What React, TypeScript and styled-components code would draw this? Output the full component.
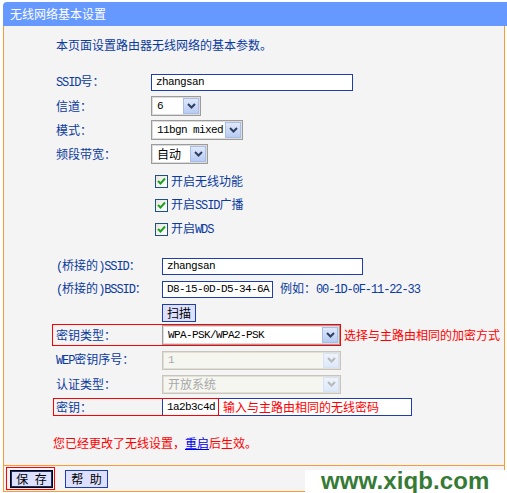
import React from "react";
import styled, { createGlobalStyle } from "styled-components";

const GlobalStyle = createGlobalStyle`
  html, body { margin: 0; padding: 0; background: #fff; }
  body { font-family: "Noto Sans CJK SC", "Noto Sans", sans-serif; font-size: 12px; }
  * { box-sizing: border-box; }
`;

const ORANGE = "#ff9a33";
const BLUE_TEXT = "#0a3aa0";
const FIELD_BORDER = "#1f3fa6";

const Page = styled.div`
  position: relative;
  width: 507px;
  height: 493px;
  padding-top: 2px;
  overflow: hidden;
`;

const TitleBar = styled.div`
  margin-left: 3px;
  height: 24px;
  background: #6699ff;
  border-top-left-radius: 4px;
  color: #fff;
  font-size: 12px;
  line-height: 24px;
  padding-left: 7px;
`;

const Panel = styled.div`
  margin-left: 3px;
  width: 502px;
  height: 439px;
  border-left: 1px solid ${ORANGE};
  border-right: 1px solid ${ORANGE};
  background: #f4f4f4;
  padding: 7px 0 0 52px;
`;

const Row = styled.div<{ $h?: number; $mt?: number; $indent?: number }>`
  position: relative;
  display: flex;
  align-items: center;
  height: ${(p) => p.$h ?? 24}px;
  margin-top: ${(p) => p.$mt ?? 0}px;
  padding-left: ${(p) => p.$indent ?? 0}px;
  line-height: 16px;
  white-space: nowrap;
`;

const Label = styled.span<{ $w: number }>`
  width: ${(p) => p.$w}px;
  flex-shrink: 0;
  color: ${BLUE_TEXT};
`;

const Note = styled.span<{ $color?: string; $ml?: number }>`
  color: ${(p) => p.$color ?? BLUE_TEXT};
  margin-left: ${(p) => p.$ml ?? 0}px;
`;

const Lat = styled.span`
  font-family: "Liberation Mono", "DejaVu Sans Mono", monospace;
  font-size: 12px;
  letter-spacing: -1.1px;
`;

const MonoValue = styled.span<{ $w?: number }>`
  width: ${(p) => (p.$w ? `${p.$w}px` : "auto")};
  flex-shrink: 0;
  font-family: "Liberation Mono", "DejaVu Sans Mono", monospace;
  font-size: 11px;
  letter-spacing: -0.6px;
`;

const Field = styled.div<{ $w: number; $h?: number }>`
  width: ${(p) => p.$w}px;
  height: ${(p) => p.$h ?? 17}px;
  border: 1px solid ${FIELD_BORDER};
  background: #fff;
  padding-left: 4px;
  display: flex;
  align-items: center;
  flex-shrink: 0;
  color: #000;
`;

const Combo = styled.div<{ $w: number; $h?: number; $disabled?: boolean }>`
  width: ${(p) => p.$w}px;
  height: ${(p) => p.$h ?? 20}px;
  display: flex;
  flex-shrink: 0;
  border: 1px solid ${(p) => (p.$disabled ? "#c8c6bc" : "#9c9c9c")};
  box-shadow: inset 0 0 0 1px ${(p) => (p.$disabled ? "#e2e0d6" : "#dcdcdc")};
  background: ${(p) => (p.$disabled ? "#f6f6f0" : "#fff")};
  padding: 1px;
`;

const ComboValue = styled.div<{ $disabled?: boolean }>`
  flex: 1;
  display: flex;
  align-items: center;
  padding-left: 4px;
  color: ${(p) => (p.$disabled ? "#a8a8a8" : "#000")};
  overflow: hidden;
`;

const ComboArrow = styled.div<{ $disabled?: boolean }>`
  width: 16px;
  flex-shrink: 0;
  display: flex;
  align-items: center;
  justify-content: center;
  border: 1px solid ${(p) => (p.$disabled ? "#d6e2f6" : "#a9bde6")};
  background: ${(p) =>
    p.$disabled
      ? "linear-gradient(#eef3fc, #dde8fa)"
      : "linear-gradient(#dfe8fb, #b7cbf2)"};
`;

const CheckBox = styled.span`
  width: 13px;
  height: 13px;
  border: 1px solid #1c5180;
  background: linear-gradient(135deg, #e8e8e2, #fff);
  display: inline-flex;
  align-items: center;
  justify-content: center;
  margin-right: 3px;
  flex-shrink: 0;
`;

const Btn = styled.button<{ $w: number; $primary?: boolean }>`
  width: ${(p) => p.$w}px;
  height: 18px;
  padding: 0;
  margin: 0;
  background: #dde0ff;
  border: 1px solid ${(p) => (p.$primary ? "#000" : FIELD_BORDER)};
  box-shadow: ${(p) => (p.$primary ? `inset 0 0 0 1px #1b2d7a` : "none")};
  font-family: "Noto Sans CJK SC", sans-serif;
  font-size: 12px;
  line-height: 16px;
  color: #000;
  word-spacing: 4px;
`;

const Highlight = styled.div`
  display: flex;
  align-items: center;
  height: 22px;
  margin-left: -4px;
  padding-left: 3px;
  border: 1px solid #ff0000;
`;

const Overlay = styled.div<{ $left: number; $w: number; $h: number }>`
  position: absolute;
  left: ${(p) => p.$left}px;
  top: 0;
  width: ${(p) => p.$w}px;
  height: ${(p) => p.$h}px;
  border: 1px solid #ff0000;
  pointer-events: none;
`;

const Link = styled.span`
  color: #0000ee;
  text-decoration: underline;
`;

const Footer = styled.div`
  margin-left: 3px;
  width: 502px;
  height: 27px;
  border-top: 1px solid ${ORANGE};
  border-bottom: 1px solid ${ORANGE};
  border-left: 1px solid ${ORANGE};
  border-right: 1px solid ${ORANGE};
  background: #f4f4f4;
  display: flex;
  align-items: center;
  padding-left: 2px;
  gap: 10px;
`;

const SaveWrap = styled.div`
  display: flex;
  border: 1px solid #ff0000;
  padding: 2px 1px 1px 3px;
`;

const Watermark = styled.div`
  position: absolute;
  right: 0;
  bottom: 0;
  width: 202px;
  height: 23px;
  background: #fff;
  padding-left: 16px;
  font-family: "Liberation Sans", Arial, sans-serif;
  font-weight: bold;
  font-size: 24px;
  line-height: 21px;
  color: #357a35;
  letter-spacing: 0.1px;
`;

const Chevron = ({ disabled }: { disabled?: boolean }) => (
  <svg width="9" height="6" viewBox="0 0 9 6">
    <path
      d="M1 1 L4.5 4.5 L8 1"
      fill="none"
      stroke={disabled ? "#b8b8b8" : "#2f3f5f"}
      strokeWidth="2"
    />
  </svg>
);

const Check = () => (
  <svg width="9" height="8" viewBox="0 0 9 8">
    <path d="M1 4 L3.5 6.5 L8 1.5" fill="none" stroke="#21a121" strokeWidth="2" />
  </svg>
);

const Select = ({
  w,
  h,
  value,
  disabled,
  mono,
}: {
  w: number;
  h?: number;
  value: string;
  disabled?: boolean;
  mono?: boolean;
}) => (
  <Combo $w={w} $h={h} $disabled={disabled}>
    <ComboValue $disabled={disabled}>
      {mono ? <MonoValue>{value}</MonoValue> : value}
    </ComboValue>
    <ComboArrow $disabled={disabled}>
      <Chevron disabled={disabled} />
    </ComboArrow>
  </Combo>
);

const CheckItem = ({ children }: { children: React.ReactNode }) => (
  <Row $indent={99}>
    <CheckBox>
      <Check />
    </CheckBox>
    <Note>{children}</Note>
  </Row>
);

export default function App() {
  return (
    <>
      <GlobalStyle />
      <Page>
        <TitleBar>无线网络基本设置</TitleBar>
        <Panel>
          <Row>
            <Note>本页面设置路由器无线网络的基本参数。</Note>
          </Row>
          <Row $mt={13}>
            <Label $w={95}>
              <Lat>SSID</Lat>号：
            </Label>
            <Field $w={202}>
              <MonoValue>zhangsan</MonoValue>
            </Field>
          </Row>
          <Row>
            <Label $w={95}>信道：</Label>
            <Select w={50} value="6" mono />
          </Row>
          <Row>
            <Label $w={95}>模式：</Label>
            <Select w={92} value="11bgn mixed" mono />
          </Row>
          <Row>
            <Label $w={95}>频段带宽：</Label>
            <Select w={57} value="自动" />
          </Row>
          <div style={{ marginTop: 3 }}>
            <CheckItem>开启无线功能</CheckItem>
            <CheckItem>
              开启<Lat>SSID</Lat>广播
            </CheckItem>
            <CheckItem>
              开启<Lat>WDS</Lat>
            </CheckItem>
          </div>
          <Row $h={22} $mt={14}>
            <Label $w={106}>
              <Lat>(</Lat>桥接的<Lat>)SSID</Lat>：
            </Label>
            <Field $w={201}>
              <MonoValue>zhangsan</MonoValue>
            </Field>
          </Row>
          <Row>
            <Label $w={106}>
              <Lat>(</Lat>桥接的<Lat>)BSSID</Lat>：
            </Label>
            <Field $w={111}>
              <MonoValue>D8-15-0D-D5-34-6A</MonoValue>
            </Field>
            <Note $ml={7}>
              例如：<Lat>00-1D-0F-11-22-33</Lat>
            </Note>
          </Row>
          <Row $indent={106}>
            <Btn $w={34}>扫描</Btn>
          </Row>
          <Row $h={22} $mt={-1}>
            <Highlight>
              <Label $w={106}>密钥类型：</Label>
              <Select w={178} value="WPA-PSK/WPA2-PSK" mono />
            </Highlight>
            <Note $color="#ff0000" $ml={3}>
              选择与主路由相同的加密方式
            </Note>
          </Row>
          <Row $mt={2}>
            <Label $w={106}>
              <Lat>WEP</Lat>密钥序号：
            </Label>
            <Select w={179} h={19} value="1" disabled mono />
          </Row>
          <Row>
            <Label $w={106}>认证类型：</Label>
            <Select w={179} h={19} value="开放系统" disabled />
          </Row>
          <Row $h={18} $mt={2}>
            <Label $w={106}>密钥：</Label>
            <Field $w={250} $h={18}>
              <MonoValue $w={52}>1a2b3c4d</MonoValue>
              <Note $color="#ff0000" $ml={4}>
                输入与主路由相同的无线密码
              </Note>
            </Field>
            <Overlay $left={-3} $w={166} $h={18} />
          </Row>
          <Row $mt={15}>
            <Note $color="#ff0000" $ml={-3}>
              您已经更改了无线设置，<Link>重启</Link>后生效。
            </Note>
          </Row>
        </Panel>
        <Footer>
          <SaveWrap>
            <Btn $w={43} $primary>
              保 存
            </Btn>
          </SaveWrap>
          <Btn $w={43}>帮 助</Btn>
        </Footer>
        <Watermark>www.xiqb.com</Watermark>
      </Page>
    </>
  );
}
